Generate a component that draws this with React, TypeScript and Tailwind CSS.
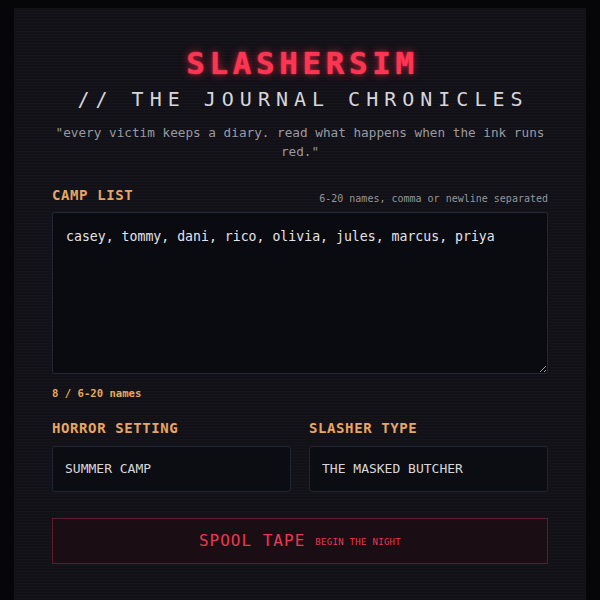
import React from "react";

const mono = "font-['DejaVu_Sans_Mono','Liberation_Mono',monospace]";

export default function App() {
  const names = "casey, tommy, dani, rico, olivia, jules, marcus, priya";

  return (
    <div className={`w-[600px] h-[600px] bg-[#060608] overflow-hidden ${mono}`}>
      <div className="relative mx-[14px] mt-2 h-[600px] bg-[#111117] px-[38px] pt-[37px]">
        {/* scanlines */}
        <div className="pointer-events-none absolute inset-0 bg-[repeating-linear-gradient(0deg,rgba(255,255,255,0.015)_0px,rgba(255,255,255,0.015)_1px,transparent_1px,transparent_3px)]" />

        {/* Header */}
        <div className="relative text-center">
          <h1 className="text-[31px] font-bold leading-[36px] tracking-[4.6px] pl-[5px] text-[#ff3553] [text-shadow:0_0_8px_rgba(255,40,70,0.7),0_0_2px_rgba(255,60,80,0.9)]">
            SLASHERSIM
          </h1>
          <p className="mt-[5px] text-[20px] leading-[26px] tracking-[6px] pl-[6px] text-[#d6d6da]">
            // THE JOURNAL CHRONICLES
          </p>
          <p className="mt-[11px] text-[12.7px] leading-[19px] text-[#9a9aa2]">
            "every victim keeps a diary. read what happens when the ink runs red."
          </p>
        </div>

        {/* Camp list */}
        <div className="relative mt-[24px]">
          <div className="flex items-end justify-between">
            <span className="text-[14px] font-bold tracking-[0.6px] text-[#e7a662]">CAMP LIST</span>
            <span className="text-[10px] text-[#95959c]">6-20 names, comma or newline separated</span>
          </div>
          <textarea
            defaultValue={names}
            spellCheck={false}
            className={`mt-[6px] block w-full h-[162px] rounded-[3px] border border-[#252737] bg-[#0a0a11] px-[13px] py-[14px] text-[13.2px] leading-[20px] text-[#e4e4e8] outline-none ${mono}`}
          />
          <p className="mt-[12px] text-[10.6px] font-bold text-[#e7a662]">8 / 6-20 names</p>
        </div>

        {/* Setting + slasher */}
        <div className="relative mt-[14px] grid grid-cols-2 gap-[18px]">
          <div>
            <span className="text-[14px] font-bold tracking-[0.6px] text-[#e7a662]">HORROR SETTING</span>
            <div className="mt-[6px] flex h-[46px] items-center rounded-[3px] border border-[#222432] bg-[#0c0c13] px-[12px] text-[13px] text-[#d8d8dc]">
              SUMMER CAMP
            </div>
          </div>
          <div>
            <span className="text-[14px] font-bold tracking-[0.6px] text-[#e7a662]">SLASHER TYPE</span>
            <div className="mt-[6px] flex h-[46px] items-center rounded-[3px] border border-[#222432] bg-[#0c0c13] px-[12px] text-[13px] text-[#d8d8dc]">
              THE MASKED BUTCHER
            </div>
          </div>
        </div>

        {/* Button */}
        <button className="relative mt-[26px] flex h-[46px] w-full items-center justify-center gap-[10px] border border-[#5c1c2c] bg-[#1a0d13] text-[#ec3852]">
          <span className="text-[16px] tracking-[1px]">SPOOL TAPE</span>
          <span className="mt-[3px] text-[9px] tracking-[0.3px]">BEGIN THE NIGHT</span>
        </button>
      </div>
    </div>
  );
}
